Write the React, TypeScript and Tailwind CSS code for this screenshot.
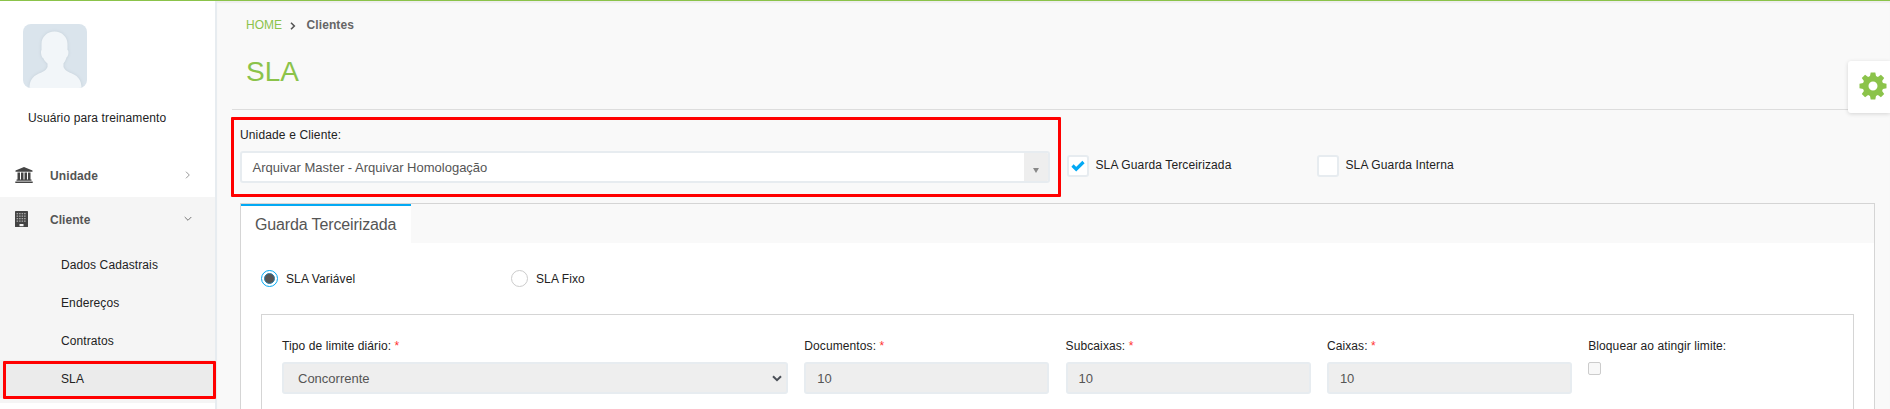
import type { ReactNode } from 'react';

function Avatar() {
  return (
    <svg viewBox="0 0 64 64" className="size-16 rounded-lg">
      <rect width="64" height="64" fill="#dae4ec" />
      <path
        d="M31.500 7.500C39 7.500 44.500 13 44.500 20L44.500 26C46 26 45.800 32 43.500 33.500C42.800 36 41.500 38 40.500 39.500L40.500 43C42 47 46 48 50 50C55 52.500 58.500 56 58.500 64L6.500 64C6.500 56 10 52.500 15 50C19 48 23 47 24.500 43L24.500 39.500C22.500 38 21 36 20.500 34.500C18 33 17.500 27 18.500 26L18.500 20C18.500 13 24 7.500 31.500 7.500Z"
        fill="#f2f6f9"
        className="drop-shadow-[0_0_1.5px_#c3ced7]"
      />
    </svg>
  );
}

function Cog() {
  return (
    <svg viewBox="0 0 28 28" className="size-7" fill="#8bc34a">
      <path
        fillRule="evenodd"
        d="M11.700 0.500h4.600l.7 3.600 1.900.8 3-2.100 3.300 3.300-2.100 3 .8 1.900 3.600.7v4.600l-3.600.7-.8 1.900 2.100 3-3.300 3.300-3-2.100-1.900.8-.7 3.600h-4.600l-.7-3.600-1.900-.8-3 2.100-3.300-3.300 2.100-3-.8-1.900-3.600-.7v-4.600l3.600-.7.800-1.900-2.100-3 3.300-3.300 3 2.100 1.900-.8zM14 9.500a4.500 4.500 0 1 0 0 9a4.500 4.500 0 1 0 0-9z"
      />
    </svg>
  );
}

function Bank() {
  return (
    <svg viewBox="0 0 18 16" className="h-4 w-[18px]" fill="#444">
      <path d="M9 0l8.500 3.500v1.200h-17V3.500zM2.500 5.500h2.500v7H2.500zM6 5.500h2.500v7H6zM9.500 5.500H12v7H9.500zM13 5.500h2.500v7H13zM1.500 12.500h15v1.200h-15zM.3 14.400h17.400V16H.3z" />
    </svg>
  );
}

function Building() {
  const rows = [2, 4.5, 7, 9.5];
  const cols = [2.2, 4.7, 7.2, 9.7];
  return (
    <svg viewBox="0 0 13 16" className="h-4 w-[13px]">
      <rect width="13" height="16" rx=".6" fill="#444" />
      {rows.map((y) => cols.map((x) => <rect key={`${x}-${y}`} x={x - 0.6} y={y} width="1.5" height="1.3" fill="#aaa" />))}
      <rect x="4.500" y="13" width="4" height="2.200" fill="#f4f4f4" />
    </svg>
  );
}

function Field({ label, className, children }: { label: string; className: string; children: ReactNode }) {
  return (
    <div className={className}>
      <div className="h-[27px] pt-[2px] leading-[18px] tracking-[0.1px] text-[#222]">
        {label} <span className="text-[#f33]">*</span>
      </div>
      {children}
    </div>
  );
}

function NumberBox({ label }: { label: string }) {
  return (
    <Field label={label} className="w-[245px]">
      <div className="flex h-8 items-center rounded-[3px] border-2 border-[#e7ecf0] bg-[#eee] px-[11px] pt-px text-[13px] text-[#555]">10</div>
    </Field>
  );
}

function SubItem({ label, active = false }: { label: string; active?: boolean }) {
  return (
    <a className={`flex h-[38px] items-center pl-[61px] tracking-[0.1px] text-[#222] ${active ? 'bg-[#ebebeb]' : ''}`}>{label}</a>
  );
}

function Sidebar() {
  return (
    <aside className="relative h-full w-[217px] shrink-0 border-r-2 border-[#e7ecf0] bg-white">
      <div className="pt-[23px] pl-[23px]">
        <Avatar />
      </div>
      <div className="mt-[21px] pl-[28px] leading-[18px] tracking-[0.12px] text-[#222]">Usuário para treinamento</div>
      <div className="mt-[26px] flex h-11 items-center pl-[15px] text-xs font-bold text-[#555]">
        <Bank />
        <span className="ml-[17px] flex-1 pt-px tracking-[0.1px]">Unidade</span>
        <svg viewBox="0 0 6 8" className="mr-[24px] h-2 w-1.5" fill="none" stroke="#999">
          <path d="M1 .7L4.300 4 1 7.300" />
        </svg>
      </div>
      <div className="h-[206px] bg-[#f5f5f5]">
        <div className="flex h-[44px] items-center pl-[15px] text-xs font-bold text-[#555]">
          <Building />
          <span className="ml-[22px] flex-1 pt-px tracking-[0.05px]">Cliente</span>
          <svg viewBox="0 0 8 6" className="mr-[23px] h-1.5 w-2" fill="none" stroke="#777">
            <path d="M.7 1L4 4.300 7.300 1" />
          </svg>
        </div>
        <nav className="pt-[5px]">
          <SubItem label="Dados Cadastrais" />
          <SubItem label="Endereços" />
          <SubItem label="Contratos" />
          <SubItem label="SLA" active />
        </nav>
      </div>
      <div className="absolute top-[360px] left-[3px] h-[38px] w-[213px] rounded-[1px] border-3 border-[#f00]" />
    </aside>
  );
}

export default function App() {
  return (
    <div className="relative flex h-[409px] w-[1890px] flex-col overflow-hidden bg-[#f9f9f9] font-['Liberation_Sans',Arial,sans-serif] text-xs">
      <div className="h-px shrink-0 bg-[#8bc34a]" />
      <div className="flex min-h-0 flex-1">
        <Sidebar />
        <main className="min-w-0 flex-1 shadow-[inset_0_2px_1px_#eee]">
          <header className="ml-[15px] h-[109px] border-b border-[#ddd] pl-[14px]">
            <div className="flex items-center pt-[15px] leading-[18px]">
              <span className="text-[#8bc34a]">HOME</span>
              <svg viewBox="0 0 6 8" className="mt-px ml-2 h-2 w-1.5" fill="none" stroke="#555" strokeWidth="1.600">
                <path d="M1 .8L4.300 4 1 7.200" />
              </svg>
              <span className="ml-[10.5px] font-bold tracking-[0.1px] text-[#666]">Clientes</span>
            </div>
            <h1 className="mt-[22px] text-[28px] leading-8 text-[#8bc34a]">SLA</h1>
          </header>

          <section className="mt-[7px] ml-[14px] flex h-20">
            <div className="w-[830px] rounded-[1px] border-3 border-[#f00] pt-[6px] pl-[6px]">
              <div className="h-[25px] leading-[18px] tracking-[0.14px] text-[#222]">Unidade e Cliente:</div>
              <div className="flex h-8 w-[810px] overflow-hidden rounded-[3px] border-2 border-[#e7ecf0] bg-white">
                <span className="flex flex-1 items-center pt-px pl-[10.5px] text-[13px] text-[#555]">Arquivar Master - Arquivar Homologação</span>
                <span className="flex w-6 items-center justify-center bg-[#eee] pt-[7px]">
                  <svg viewBox="0 0 6 5" className="h-[5px] w-1.5" fill="#888">
                    <path d="M0 0h6L3 5z" />
                  </svg>
                </span>
              </div>
            </div>
            <div className="ml-[6px] flex w-[250px] pt-[38px]">
              <span className="flex size-[22px] items-center justify-center rounded-[3px] border-2 border-[#e7ecf0] bg-white">
                <svg viewBox="0 0 14 12" className="h-3 w-3.5" fill="none" stroke="#03a9f4" strokeWidth="3.200">
                  <path d="M1.500 5.500L5.200 9.200 12.500 2" />
                </svg>
              </span>
              <span className="ml-[6.5px] pt-px leading-[19px] tracking-[0.12px] text-[#222]">SLA Guarda Terceirizada</span>
            </div>
            <div className="flex pt-[38px]">
              <span className="size-[22px] rounded-[3px] border-2 border-[#e7ecf0] bg-white" />
              <span className="ml-[6.5px] pt-px leading-[19px] tracking-[0.12px] text-[#222]">SLA Guarda Interna</span>
            </div>
          </section>

          <section className="mt-[6px] ml-[23px] h-[300px] w-[1635px] border border-[#d5d5d5] bg-white">
            <div className="flex h-[39px] bg-[#f9f9f9]">
              <div className="h-[39px] w-[170px] border-t-2 border-[#03a9f4] bg-white pt-[8px] pl-[14px] text-base leading-[22px] tracking-[-0.13px] text-[#555]">
                Guarda Terceirizada
              </div>
            </div>
            <div className="mt-[26px] ml-[20px] flex h-[18px] items-center text-[#222]">
              <div className="flex w-[250px] items-center">
                <span className="flex size-[17px] items-center justify-center rounded-full border border-[#03a9f4]">
                  <span className="size-[11px] rounded-full border border-[#2f7fa6] bg-[#555]" />
                </span>
                <span className="ml-2 pt-px tracking-[0.12px]">SLA Variável</span>
              </div>
              <span className="size-[17px] rounded-full border border-[#ccc]" />
              <span className="ml-2 pt-px tracking-[0.1px]">SLA Fixo</span>
            </div>
            <div className="mt-[27px] ml-5 flex h-[200px] w-[1593px] gap-[16.3px] border border-[#d5d5d5] pt-5 pl-5">
              <Field label="Tipo de limite diário:" className="w-[506px]">
                <div className="flex h-8 items-center justify-between rounded-[3px] border-2 border-[#e7ecf0] bg-[#eee] pt-px pr-1 pl-[14px] text-[13px] text-[#555]">
                  Concorrente
                  <svg viewBox="0 0 10 7" className="h-[7px] w-2.5" fill="none" stroke="#4a4f57" strokeWidth="2">
                    <path d="M1 1.200l4 4 4-4" />
                  </svg>
                </div>
              </Field>
              <NumberBox label="Documentos:" />
              <NumberBox label="Subcaixas:" />
              <NumberBox label="Caixas:" />
              <div>
                <div className="h-[27px] pt-[2px] leading-[18px] tracking-[0.1px] text-[#222]">Bloquear ao atingir limite:</div>
                <div className="size-[13px] rounded-[2px] border border-[#ccc] bg-[#f8f8f8]" />
              </div>
            </div>
          </section>
        </main>
      </div>
      <div className="absolute top-[61px] right-0 flex h-[52px] w-[42px] justify-end rounded-l-[3px] bg-white pt-[11px] pr-[3px] shadow-[0_1px_4px_rgba(0,0,0,0.15)]">
        <Cog />
      </div>
    </div>
  );
}
